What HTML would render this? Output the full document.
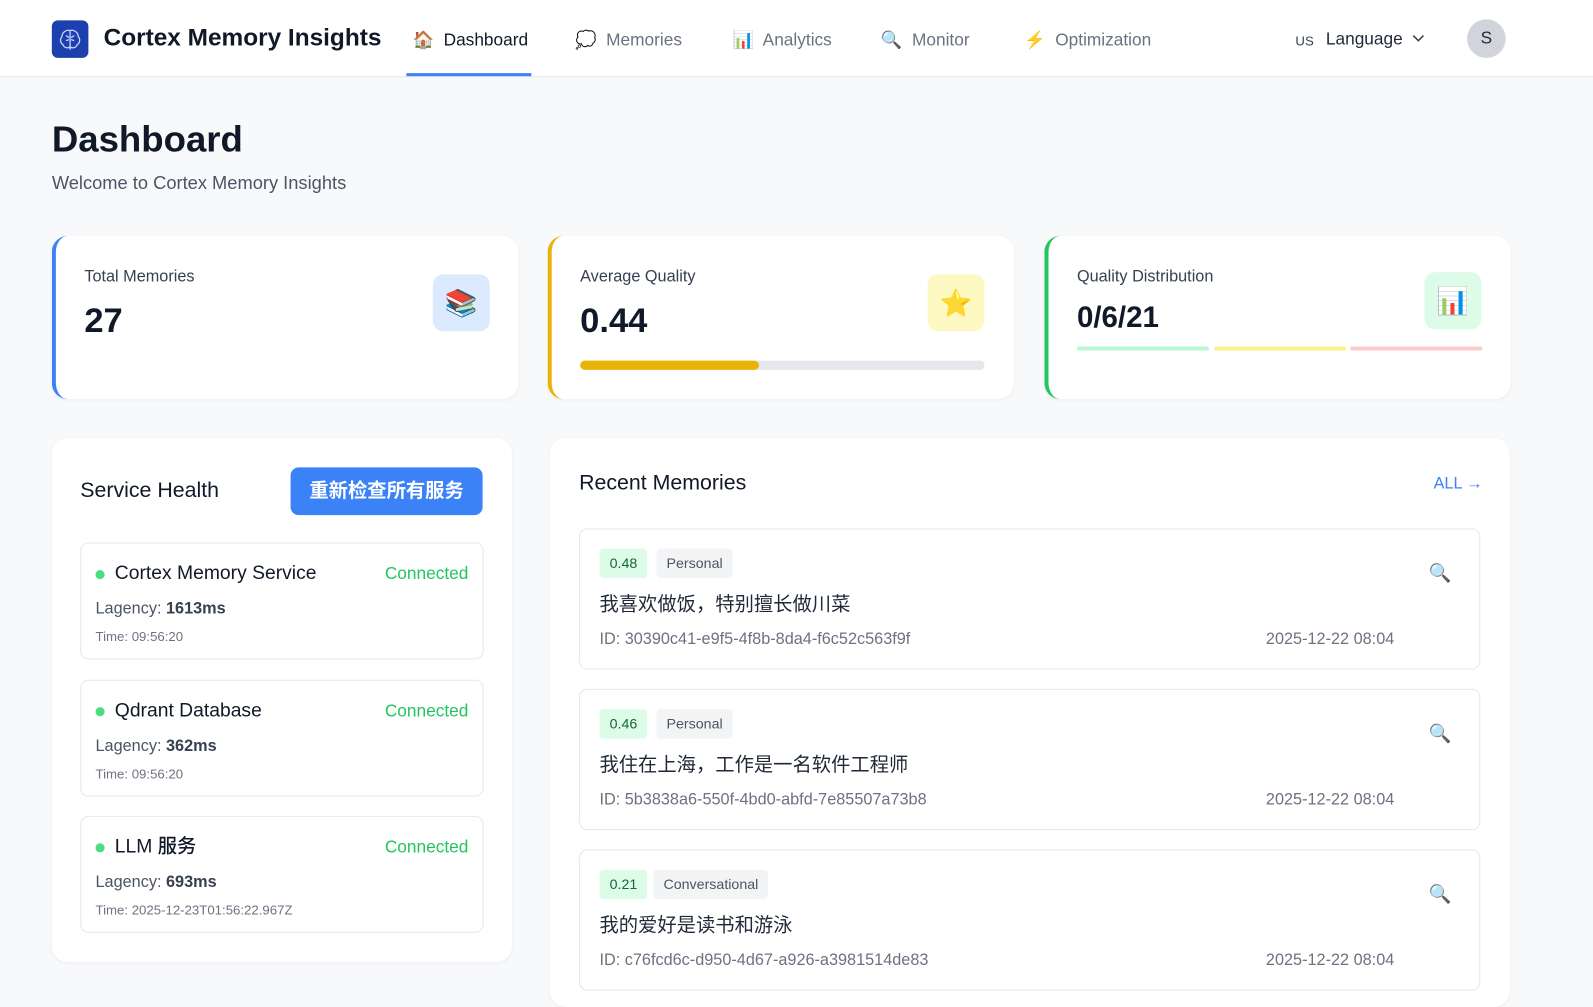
<!DOCTYPE html>
<html><head><meta charset="utf-8"><style>
*{box-sizing:border-box;margin:0;padding:0}
body{width:1593px;height:991px;overflow:hidden;background:#f8f9fb;font-family:"Liberation Sans","Noto Sans CJK SC",sans-serif;color:#111827;position:relative}
#w{position:absolute;left:0;top:0;width:1568px;height:976px;transform:scale(1.016);transform-origin:0 0}
.a{position:absolute}
header{position:absolute;left:0;top:0;width:1568px;height:76px;background:#fff;border-bottom:1px solid #e5e7eb}
.nav{font-size:17px;color:#6b7280;top:30px}
.card{position:absolute;background:#fff;border-radius:16px;box-shadow:0 1px 3px rgba(0,0,0,.05)}
.stat{top:232px;width:459px;height:161px}
.lbl{font-size:16px;color:#374151}
.big{font-size:34px;font-weight:bold}
.ib{position:absolute;width:56px;height:56px;border-radius:10px;display:flex;align-items:center;justify-content:center;font-size:26px}
.svc{position:absolute;left:28px;width:397px;height:115px;border:1px solid #e5e7eb;border-radius:8px}
.svc .t{position:absolute;left:33px;top:18px;font-size:19px;line-height:24px;height:24px;font-weight:500}
.svc .d{position:absolute;left:14px;top:26px;width:9px;height:9px;border-radius:50%;background:#4ade80}
.svc .c{position:absolute;right:14px;top:20px;font-size:17px;color:#22c55e}
.svc .l{position:absolute;left:14px;top:56px;font-size:16px;color:#4b5563}
.svc .l b{color:#374151}
.svc .tm{position:absolute;left:14px;top:84px;font-size:13px;color:#6b7280}
.mem{position:absolute;left:29px;width:887px;height:139px;border:1px solid #e5e7eb;border-radius:8px}
.sc{position:absolute;left:19px;top:19px;height:29px;padding:0 10px;line-height:29px;font-size:14px;background:#dcfce7;color:#166534;border-radius:4px;font-weight:500}
.tg{position:absolute;top:19px;height:29px;padding:0 10px;line-height:29px;font-size:14px;background:#f3f4f6;color:#4b5563;border-radius:4px}
.mt{position:absolute;left:19px;top:59px;font-size:19px;color:#1f2937}
.id{position:absolute;left:19px;top:100px;font-size:16px;color:#6b7280}
.dt{position:absolute;left:675px;top:100px;font-size:16px;color:#6b7280}
.mg{position:absolute;left:835px;top:33px;font-size:18px}
</style></head><body><div id="w">
<header>
<div class="a" style="left:51px;top:20px;width:36px;height:37px;background:#1e40af;border-radius:6px;display:flex;align-items:center;justify-content:center">
<svg width="26" height="26" viewBox="0 0 26 26" fill="none" stroke="#c7d2fe" stroke-width="1.3"><path d="M13 4C9 3 5 6 5 10c-2 2-2 6 1 8 1 3 5 4 7 2V4zM13 4c4-1 8 2 8 6 2 2 2 6-1 8-1 3-5 4-7 2"/><path d="M9 9l3 2M9 14l3-1M17 9l-3 2M17 14l-3-1M13 20v3"/></svg></div>
<div class="a" style="left:102px;top:24px;font-size:24px;font-weight:bold;color:#111827">Cortex Memory Insights</div>
<div class="a nav" style="left:406px;color:#111827">🏠&nbsp; Dashboard</div>
<div class="a" style="left:400px;top:72px;width:123px;height:3px;background:#3b82f6"></div>
<div class="a nav" style="left:566px">💭&nbsp; Memories</div>
<div class="a nav" style="left:721px">📊&nbsp; Analytics</div>
<div class="a nav" style="left:867px">🔍&nbsp; Monitor</div>
<div class="a nav" style="left:1008px">⚡&nbsp; Optimization</div>
<div class="a" style="left:1275px;top:33px;font-size:13px;color:#374151">US</div>
<div class="a" style="left:1305px;top:29px;font-size:17px;color:#1f2937">Language</div>
<svg class="a" style="left:1389px;top:32px" width="14" height="12" viewBox="0 0 14 12"><path d="M2 3l5 5 5-5" stroke="#374151" stroke-width="1.5" fill="none"/></svg>
<div class="a" style="left:1444px;top:19px;width:38px;height:38px;border-radius:50%;background:#d1d5db;text-align:center;line-height:38px;font-size:17px;color:#1f2937">S</div>
</header>
<div class="a" style="left:51px;top:116px;font-size:36px;font-weight:bold">Dashboard</div>
<div class="a" style="left:51px;top:170px;font-size:18px;color:#4b5563">Welcome to Cortex Memory Insights</div>

<div class="card stat" style="left:51px;border-left:4px solid #3b82f6">
<div class="a lbl" style="left:28px;top:32px">Total Memories</div>
<div class="a big" style="left:28px;top:65px">27</div>
<div class="ib" style="left:371px;top:38px;background:#dbeafe">📚</div></div>

<div class="card stat" style="left:539px;border-left:4px solid #eab308">
<div class="a lbl" style="left:28px;top:32px">Average Quality</div>
<div class="a big" style="left:28px;top:65px">0.44</div>
<div class="ib" style="left:370px;top:38px;background:#fef9c3">⭐</div>
<div class="a" style="left:28px;top:123px;width:398px;height:9px;border-radius:5px;background:#e5e7eb"><div style="width:176px;height:9px;border-radius:5px;background:#eab308"></div></div></div>

<div class="card stat" style="left:1028px;border-left:4px solid #22c55e">
<div class="a lbl" style="left:28px;top:32px">Quality Distribution</div>
<div class="a big" style="left:28px;top:65px;font-size:29px">0/6/21</div>
<div class="ib" style="left:370px;top:36px;background:#dcfce7">📊</div>
<div class="a" style="left:28px;top:109px;width:130px;height:4px;background:#bbf7d0;border-radius:2px"></div>
<div class="a" style="left:163px;top:109px;width:130px;height:4px;background:#fef08a;border-radius:2px"></div>
<div class="a" style="left:297px;top:109px;width:130px;height:4px;background:#fecaca;border-radius:2px"></div></div>

<div class="card" style="left:51px;top:431px;width:453px;height:516px">
<div class="a" style="left:28px;top:40px;font-size:21px;font-weight:500">Service Health</div>
<div class="a" style="left:235px;top:29px;width:189px;height:47px;background:#3b82f6;border-radius:8px;color:#fff;font-size:19px;font-weight:bold;text-align:center;line-height:47px">重新检查所有服务</div>
<div class="svc" style="top:103px"><span class="d"></span><span class="t">Cortex Memory Service</span><span class="c">Connected</span><span class="l">Lagency: <b>1613ms</b></span><span class="tm">Time: 09:56:20</span></div>
<div class="svc" style="top:238px"><span class="d"></span><span class="t">Qdrant Database</span><span class="c">Connected</span><span class="l">Lagency: <b>362ms</b></span><span class="tm">Time: 09:56:20</span></div>
<div class="svc" style="top:372px"><span class="d"></span><span class="t">LLM 服务</span><span class="c">Connected</span><span class="l">Lagency: <b>693ms</b></span><span class="tm">Time: 2025-12-23T01:56:22.967Z</span></div>
</div>

<div class="card" style="left:541px;top:431px;width:945px;height:560px">
<div class="a" style="left:29px;top:33px;font-size:21px;font-weight:500">Recent Memories</div>
<div class="a" style="left:870px;top:37px;font-size:16px;color:#3b82f6;font-weight:500">ALL →</div>
<div class="mem" style="top:89px"><span class="sc">0.48</span><span class="tg" style="left:75px">Personal</span><span class="mt">我喜欢做饭，特别擅长做川菜</span><span class="id">ID: 30390c41-e9f5-4f8b-8da4-f6c52c563f9f</span><span class="dt">2025-12-22 08:04</span><span class="mg">🔍</span></div>
<div class="mem" style="top:247px"><span class="sc">0.46</span><span class="tg" style="left:75px">Personal</span><span class="mt">我住在上海，工作是一名软件工程师</span><span class="id">ID: 5b3838a6-550f-4bd0-abfd-7e85507a73b8</span><span class="dt">2025-12-22 08:04</span><span class="mg">🔍</span></div>
<div class="mem" style="top:405px"><span class="sc">0.21</span><span class="tg" style="left:72px">Conversational</span><span class="mt">我的爱好是读书和游泳</span><span class="id">ID: c76fcd6c-d950-4d67-a926-a3981514de83</span><span class="dt">2025-12-22 08:04</span><span class="mg">🔍</span></div>
</div>
</div></body></html>
